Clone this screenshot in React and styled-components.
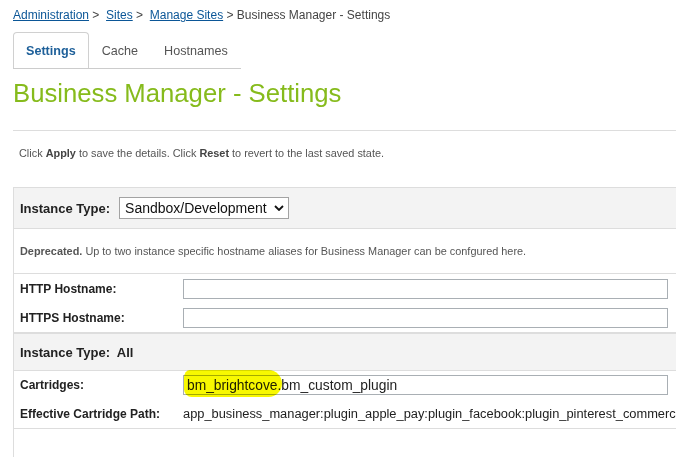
import styled, { createGlobalStyle } from "styled-components";

const GlobalStyle = createGlobalStyle`
  html, body {
    margin: 0;
    padding: 0;
    background: #fff;
    overflow: hidden;
  }
  body {
    font-family: "Liberation Sans", Arial, sans-serif;
    color: #222;
  }
`;

const tabs = [
  { id: "settings", label: "Settings", active: true },
  { id: "cache", label: "Cache" },
  { id: "hostnames", label: "Hostnames" },
];

export default function App() {
  return (
    <Page>
      <GlobalStyle />
      <Crumbs>
        <a href="#">Administration</a>&nbsp;&gt;&nbsp;&nbsp;
        <a href="#">Sites</a>&nbsp;&gt;&nbsp;&nbsp;
        <a href="#">Manage Sites</a> &gt; Business Manager - Settings
      </Crumbs>

      <TabBar>
        {tabs.map((t) => (
          <Tab key={t.id} $active={t.active}>
            {t.label}
          </Tab>
        ))}
      </TabBar>

      <Title>Business Manager - Settings</Title>
      <Rule />

      <Hint>
        Click <b>Apply</b> to save the details. Click <b>Reset</b> to revert to
        the last saved state.
      </Hint>

      <Panel>
        <Header $h={40}>
          <HeadLabel>Instance Type:</HeadLabel>
          <SelectWrap>
            <Select defaultValue="sandbox">
              <option value="sandbox">Sandbox/Development</option>
              <option value="staging">Staging</option>
              <option value="production">Production</option>
            </Select>
            <Chevron viewBox="0 0 10 6" aria-hidden="true">
              <path d="M1 1l4 4 4-4" fill="none" stroke="#111" strokeWidth="1.8" />
            </Chevron>
          </SelectWrap>
        </Header>

        <Note>
          <span>
            <b>Deprecated.</b> Up to two instance specific hostname aliases for
            Business Manager can be confgured here.
          </span>
        </Note>

        <Section $thick>
          <Row $h={29}>
            <Label>HTTP Hostname:</Label>
            <Field />
          </Row>
          <Row $h={29}>
            <Label>HTTPS Hostname:</Label>
            <Field />
          </Row>
        </Section>

        <Header $h={36}>
          <HeadLabel>Instance Type:&nbsp; All</HeadLabel>
        </Header>

        <Section>
          <Row $h={28}>
            <Label>Cartridges:</Label>
            <FieldWrap>
              <Field defaultValue="bm_brightcove.bm_custom_plugin" />
              <Marker />
            </FieldWrap>
          </Row>
          <Row $h={29}>
            <Label>Effective Cartridge Path:</Label>
            <PathText>
              app_business_manager:plugin_apple_pay:plugin_facebook:plugin_pinterest_commerce
            </PathText>
          </Row>
        </Section>
      </Panel>
    </Page>
  );
}

const Page = styled.div`
  padding: 8px 0 0 13px;
  min-height: 449px;
  display: flex;
  flex-direction: column;
`;

const Crumbs = styled.div`
  font-size: 12px;
  line-height: 14px;
  color: #444;
  white-space: nowrap;

  a {
    color: #0b5697;
    text-decoration: underline;
  }
`;

const TabBar = styled.div`
  display: flex;
  width: 228px;
  margin-top: 10px;
  border-bottom: 1px solid #ccc;
`;

const Tab = styled.div`
  height: 35px;
  padding: 0 12px;
  display: flex;
  align-items: center;
  font-size: 12.6px;
  border: 1px solid ${(p) => (p.$active ? "#d0d0d0" : "transparent")};
  border-bottom: none;
  border-radius: 4px 4px 0 0;
  color: ${(p) => (p.$active ? "#1d5f99" : "#555")};
  font-weight: ${(p) => (p.$active ? "bold" : "normal")};
`;

const Title = styled.h1`
  margin: 9px 0 0;
  font-size: 25.7px;
  line-height: 30px;
  font-weight: normal;
  color: #86bb1c;
`;

const Rule = styled.div`
  margin-top: 22px;
  height: 1px;
  background: #ddd;
`;

const Hint = styled.div`
  margin: 15px 0 0 6px;
  font-size: 10.9px;
  line-height: 14px;
  color: #555;

  b {
    color: #444;
  }
`;

const Panel = styled.div`
  flex: 1;
  margin-top: 27px;
  border-left: 1px solid #ddd;
  border-top: 1px solid #ddd;
  display: flex;
  flex-direction: column;
  overflow: hidden;
`;

const Header = styled.div`
  height: ${(p) => p.$h}px;
  padding-left: 6px;
  display: flex;
  align-items: center;
  gap: 9px;
  background: #f3f3f3;
  border-bottom: 1px solid #ddd;
`;

const HeadLabel = styled.span`
  font-size: 13px;
  font-weight: bold;
  color: #222;
`;

const SelectWrap = styled.div`
  position: relative;
  display: flex;
`;

const Select = styled.select`
  appearance: none;
  width: 170px;
  height: 22px;
  padding: 0 0 0 5px;
  border: 1px solid #a3a3a3;
  border-radius: 0;
  background: #fff;
  font-family: "Liberation Sans", Arial, sans-serif;
  font-size: 14px;
  color: #111;
`;

const Chevron = styled.svg`
  position: absolute;
  right: 5px;
  top: 8px;
  width: 10px;
  height: 6px;
  pointer-events: none;
`;

const Note = styled.div`
  height: 44px;
  padding-left: 6px;
  display: flex;
  align-items: center;
  font-size: 10.9px;
  color: #555;
  border-bottom: 1px solid #ddd;
  white-space: nowrap;
`;

const Section = styled.div`
  display: flex;
  flex-direction: column;
  border-bottom: ${(p) => (p.$thick ? 2 : 1)}px solid #ddd;
`;

const Row = styled.div`
  height: ${(p) => p.$h}px;
  padding-left: 6px;
  display: flex;
  align-items: center;
`;

const Label = styled.span`
  width: 163px;
  flex: none;
  font-size: 12px;
  font-weight: bold;
  color: #222;
`;

const FieldWrap = styled.div`
  position: relative;
  display: flex;
`;

const Field = styled.input`
  width: 485px;
  height: 20px;
  box-sizing: border-box;
  padding: 0 3px;
  border: 1px solid #a9afb4;
  border-radius: 0;
  font-family: "Liberation Sans", Arial, sans-serif;
  font-size: 13.8px;
  color: #222;
  outline: none;
`;

const Marker = styled.span`
  position: absolute;
  left: 1px;
  top: -5px;
  width: 98px;
  height: 27px;
  background: #f8f800;
  border-radius: 6px 14px 14px 8px / 8px 14px 14px 8px;
  mix-blend-mode: multiply;
  pointer-events: none;
`;

const PathText = styled.span`
  flex: none;
  font-size: 12.85px;
  color: #222;
  white-space: nowrap;
`;
